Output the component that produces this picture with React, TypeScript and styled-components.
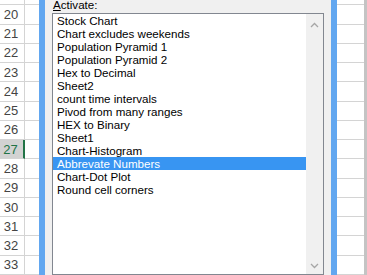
import styled, { createGlobalStyle } from "styled-components";

const GlobalStyle = createGlobalStyle`
  html, body {
    margin: 0;
    padding: 0;
    background: #ffffff;
    overflow: hidden;
  }
`;

const rows = [19, 20, 21, 22, 23, 24, 25, 26, 27, 28, 29, 30, 31, 32, 33];
const selectedRow = 27;

const sheets = [
  "Stock Chart",
  "Chart excludes weekends",
  "Population Pyramid 1",
  "Population Pyramid 2",
  "Hex to Decimal",
  "Sheet2",
  "count time intervals",
  "Pivod from many ranges",
  "HEX to Binary",
  "Sheet1",
  "Chart-Histogram",
  "Abbrevate Numbers",
  "Chart-Dot Plot",
  "Round cell corners",
];
const activeSheet = "Abbrevate Numbers";

const Screen = styled.div`
  display: flex;
  width: 367px;
  height: 275px;
  overflow: hidden;
  background: #ffffff;
`;

const Column = styled.div<{ $width: number }>`
  display: flex;
  flex-direction: column;
  flex: none;
  width: ${(p) => p.$width}px;
  margin-top: -14px;
`;

const RowHead = styled.div<{ $selected?: boolean }>`
  box-sizing: border-box;
  height: 20px;
  display: flex;
  align-items: center;
  justify-content: center;
  padding-right: 2px;
  border-bottom: 1px solid #d4d4d4;
  border-right: ${(p) => (p.$selected ? "2px solid #217346" : "1px solid #d4d4d4")};
  background: ${(p) => (p.$selected ? "#d2d2d2" : "#ffffff")};
  color: ${(p) => (p.$selected ? "#217346" : "#444444")};
  font-family: "Liberation Sans", Arial, sans-serif;
  font-size: 13px;
`;

const Cell = styled.div`
  box-sizing: border-box;
  height: 20px;
  border-bottom: 1px solid #d4d4d4;
`;

const Edge = styled.div`
  flex: none;
  width: 3px;
  background: #c4c4c4;
`;

const Dialog = styled.div`
  flex: none;
  box-sizing: border-box;
  width: 298px;
  height: 275px;
  border-left: 6px solid #62a7f0;
  border-right: 6px solid #62a7f0;
  background: #f0f0f0;
  padding: 0 7px;
  display: flex;
  flex-direction: column;
  font-family: "Liberation Sans", Arial, sans-serif;
  font-size: 11.6px;
  color: #000000;
`;

const Label = styled.div`
  line-height: 15px;
  margin-top: -3px;
  margin-bottom: 1px;
  padding-left: 1px;

  u {
    text-decoration-thickness: 1px;
    text-underline-offset: 1px;
  }
`;

const ListBox = styled.div`
  box-sizing: border-box;
  height: 262px;
  border: 1px solid #828790;
  background: #ffffff;
  display: flex;
`;

const Items = styled.div`
  flex: 1;
  display: flex;
  flex-direction: column;
`;

const Item = styled.div<{ $active?: boolean }>`
  height: 13px;
  line-height: 14px;
  padding-left: 4px;
  white-space: nowrap;
  background: ${(p) => (p.$active ? "#3895f2" : "transparent")};
  color: ${(p) => (p.$active ? "#ffffff" : "#000000")};
`;

const ScrollBar = styled.div`
  flex: none;
  width: 17px;
  background: #f0f0f0;
  display: flex;
  flex-direction: column;
  justify-content: space-between;
  align-items: center;
  padding: 8px 0 5px;
`;

const Chevron = ({ down }: { down?: boolean }) => (
  <svg width="9" height="6" viewBox="0 0 9 6">
    <polyline
      points={down ? "1,1 4.5,4.5 8,1" : "1,5 4.5,1.5 8,5"}
      fill="none"
      stroke="#a6a6a6"
      strokeWidth="1.3"
    />
  </svg>
);

export default function App() {
  return (
    <>
      <GlobalStyle />
      <Screen>
        <Column $width={25}>
          {rows.map((r) => (
            <RowHead key={r} $selected={r === selectedRow}>
              {r}
            </RowHead>
          ))}
        </Column>
        <Column $width={14}>
          {rows.map((r) => (
            <Cell key={r} />
          ))}
        </Column>
        <Dialog>
          <Label>
            <u>A</u>ctivate:
          </Label>
          <ListBox>
            <Items>
              {sheets.map((s) => (
                <Item key={s} $active={s === activeSheet}>
                  {s}
                </Item>
              ))}
            </Items>
            <ScrollBar>
              <Chevron />
              <Chevron down />
            </ScrollBar>
          </ListBox>
        </Dialog>
        <Column $width={27}>
          {rows.map((r) => (
            <Cell key={r} />
          ))}
        </Column>
        <Edge />
      </Screen>
    </>
  );
}
